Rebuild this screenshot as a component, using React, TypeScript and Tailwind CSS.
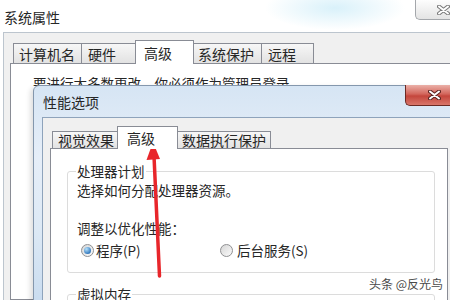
import React from "react";

function CloseX({ dark }: { dark?: boolean }) {
  return (
    <svg width="13" height="10" viewBox="0 0 13 10">
      <path d="M2 1.5 L11 8.5 M11 1.5 L2 8.5" stroke={dark ? "#5a2320" : "#7a7a7a"} strokeWidth="4" strokeLinecap="round" />
      <path d="M2 1.5 L11 8.5 M11 1.5 L2 8.5" stroke="#ffffff" strokeWidth="2" strokeLinecap="round" />
    </svg>
  );
}

function Radio({ on }: { on?: boolean }) {
  return (
    <span className="flex h-[13px] w-[13px] shrink-0 items-center justify-center rounded-full border border-[#8f9092] bg-gradient-to-br from-[#d6d6d6] to-[#fbfbfb]">
      {on && (
        <span className="h-[7px] w-[7px] rounded-full bg-[radial-gradient(circle_at_35%_30%,#b5e1fb,#2d74bb_75%)]" />
      )}
    </span>
  );
}

export default function App() {
  return (
    <div className="relative h-[300px] w-[450px] overflow-hidden bg-white font-['Noto_Sans_CJK_SC','Microsoft_YaHei',sans-serif] text-[#262626]">
      {/* 系统属性 window */}
      <div className="absolute inset-0 flex flex-col bg-[radial-gradient(ellipse_70px_22px_at_335px_8px,#d9f1fa,transparent)]">
        <div className="relative h-[32px] shrink-0 pl-[4px] pt-[7px] text-[14px] leading-[20px]">
          系统属性
          <div className="absolute left-[415px] top-0 flex h-[20px] w-[45px] items-center rounded-bl-[5px] border-b border-l border-[#a4a7ab] bg-gradient-to-b from-[#fdfdfd] to-[#e4e4e4] pl-[21px]">
            <CloseX />
          </div>
        </div>
        <div className="ml-[3px] flex flex-1 flex-col border-l border-t border-[#bcc5ce] bg-[#f0f0f0] pl-[6px] pt-[7px]">
          <div className="flex h-[23px] items-end pl-[3px] text-[14px] leading-none">
            <div className="flex h-[20px] w-[69px] items-center border border-b-0 border-[#898c95] bg-gradient-to-b from-[#f7f7f7] to-[#e2e2e2] pl-[5px]">计算机名</div>
            <div className="-ml-px flex h-[20px] w-[55px] items-center border border-b-0 border-[#898c95] bg-gradient-to-b from-[#f7f7f7] to-[#e2e2e2] pl-[6px]">硬件</div>
            <div className="relative z-10 -mb-px -ml-px flex h-[24px] w-[59px] items-center border border-b-0 border-[#898c95] bg-white pl-[8px]">高级</div>
            <div className="-ml-px flex h-[20px] w-[69px] items-center border border-b-0 border-[#898c95] bg-gradient-to-b from-[#f7f7f7] to-[#e2e2e2] pl-[4px]">系统保护</div>
            <div className="-ml-px flex h-[20px] w-[53px] items-center border border-b-0 border-[#898c95] bg-gradient-to-b from-[#f7f7f7] to-[#e2e2e2] pl-[6px]">远程</div>
          </div>
          <div className="w-[470px] flex-1 border border-[#898c95] bg-white pl-[22px] pt-[9px] text-[13.5px] leading-[20px]">
            要进行大多数更改，你必须作为管理员登录。
          </div>
        </div>
      </div>

      {/* 性能选项 window */}
      <div className="absolute left-[33px] top-[85px] h-[240px] w-[430px] rounded-t-[6px] border border-[#8497ad] bg-[linear-gradient(180deg,#d6e5f4,#e6eef8_30%,#dde9f5_60%,#c3d8ee)] shadow-[-3px_2px_5px_rgba(0,0,0,0.12)]">
        <div className="relative h-[31px] pl-[9px] pt-[6px] text-[14px] leading-[20px]">
          性能选项
          <div className="absolute left-[371px] top-[-1px] flex h-[21px] w-[50px] items-center rounded-bl-[5px] border-b border-l border-[#6b2a24] bg-[linear-gradient(180deg,#eab0a8,#d3665c_45%,#c4463c_55%,#d9766a)] pl-[22px]">
            <CloseX dark />
          </div>
        </div>
        <div className="ml-[8px] h-full border-l border-t border-[#8ea3bb] bg-[#f0f0f0] pl-[7px] pt-[8px]">
          <div className="flex h-[22px] items-end pl-[2px] text-[14px] leading-none">
            <div className="flex h-[17px] w-[66px] items-center border border-b-0 border-[#898c95] bg-gradient-to-b from-[#f7f7f7] to-[#e2e2e2] pl-[5px]">视觉效果</div>
            <div className="relative z-10 -mb-px -ml-px flex h-[23px] w-[61px] items-center border border-b-0 border-[#898c95] bg-white pl-[9px]">高级</div>
            <div className="-ml-px flex h-[17px] w-[94px] items-center border border-b-0 border-[#898c95] bg-gradient-to-b from-[#f7f7f7] to-[#e2e2e2] pl-[4px]">数据执行保护</div>
          </div>
          <div className="h-[200px] w-[398px] border border-[#898c95] bg-white text-[13.5px] leading-[18px]">
            <fieldset className="ml-[16px] mt-[13px] w-[368px] rounded-[3px] border border-[#dcdcdc] pb-[13px] pl-[9px] pt-[1px]">
              <legend className="-ml-px px-[1px]">处理器计划</legend>
              <div>选择如何分配处理器资源。</div>
              <div className="mt-[20px]">调整以优化性能：</div>
              <div className="mt-[4px] flex h-[18px] items-center pl-[4px]">
                <div className="flex w-[139px] items-center gap-[2px]">
                  <Radio on />
                  <span>程序(P)</span>
                </div>
                <div className="flex items-center gap-[4px]">
                  <Radio />
                  <span>后台服务(S)</span>
                </div>
              </div>
            </fieldset>
            <fieldset className="ml-[16px] mt-[12px] h-[40px] w-[368px] rounded-[3px] border border-[#dcdcdc] pl-[9px]">
              <legend className="-ml-px px-[1px]">虚拟内存</legend>
            </fieldset>
          </div>
        </div>
      </div>

      {/* watermark */}
      <div className="absolute left-[369px] top-[276px] text-[12px] leading-[16px] text-[#4a4a4a]">头条 @反光鸟</div>

      {/* red arrow */}
      <svg className="pointer-events-none absolute left-0 top-0" width="450" height="300">
        <path d="M154 156 L159.5 276" stroke="#e8262b" strokeWidth="3.5" strokeLinecap="round" />
        <polygon points="153,142 146.5,160 160,159" fill="#e8262b" />
      </svg>
    </div>
  );
}
